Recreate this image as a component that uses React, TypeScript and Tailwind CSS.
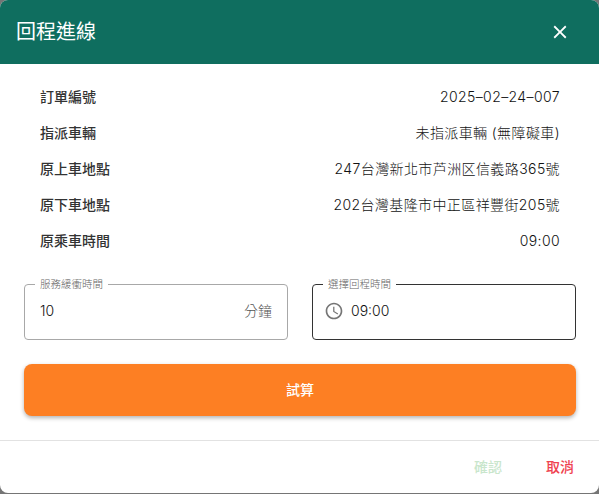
const rows = [
  { label: "訂單編號", value: "2025–02–24–007" },
  { label: "指派車輛", value: "未指派車輛 (無障礙車)" },
  { label: "原上車地點", value: "247台灣新北市芦洲区信義路365號" },
  { label: "原下車地點", value: "202台灣基隆市中正區祥豐街205號" },
  { label: "原乘車時間", value: "09:00" },
];

const font = "font-['Inter','Noto_Sans_CJK_TC',sans-serif]";

export default function App() {
  return (
    <div className={`h-[494px] w-[599px] overflow-hidden bg-[#757575] ${font}`}>
      <div className="flex h-[493px] w-[599px] flex-col overflow-hidden rounded-lg bg-white">
        <div className="flex h-16 items-center justify-between bg-[#0f6e5f] pl-4 pr-[28px]">
          <h2 className="text-xl font-normal text-white">回程進線</h2>
          <svg viewBox="0 0 24 24" className="size-[22px] fill-white">
            <path d="M19 6.41 17.59 5 12 10.59 6.41 5 5 6.41 10.59 12 5 17.59 6.41 19 12 13.41 17.59 19 19 17.59 13.41 12z" />
          </svg>
        </div>

        <div className="flex flex-col pl-10 pr-[39px] pt-[15px]">
          {rows.map((row) => (
            <div key={row.label} className="flex h-9 items-center justify-between text-sm">
              <span className="font-medium text-[#333333]">{row.label}</span>
              <span className="font-light tracking-[0.4px] text-[#111111]">{row.value}</span>
            </div>
          ))}
        </div>

        <div className="mt-5 flex gap-6 pl-6 pr-[23px]">
          <fieldset className="h-[61px] flex-1 rounded border border-[#a8a8a8] pl-[10px] pr-[15px]">
            <legend className="px-[5px] text-[10.5px] font-light leading-[11px] text-[#666666]">服務緩衝時間</legend>
            <div className="flex h-[41px] items-center justify-between pl-[5px] text-sm font-light">
              <span className="text-[#111111]">10</span>
              <span className="text-[#555555]">分鐘</span>
            </div>
          </fieldset>
          <fieldset className="h-[61px] flex-1 rounded border border-[#333333] pl-[10px] pr-[15px]">
            <legend className="px-[5px] text-[10.5px] font-light leading-[11px] text-[#666666]">選擇回程時間</legend>
            <div className="flex h-[41px] items-center gap-[7px] pl-[1px] text-sm font-light">
              <svg viewBox="0 0 24 24" className="size-5 fill-[#757575]">
                <path d="M11.99 2C6.47 2 2 6.48 2 12s4.47 10 9.99 10C17.52 22 22 17.52 22 12S17.52 2 11.99 2zM12 20c-4.42 0-8-3.58-8-8s3.58-8 8-8 8 3.58 8 8-3.58 8-8 8zm.5-13H11v6l5.25 3.15.75-1.23-4.5-2.67z" />
              </svg>
              <span className="text-[#111111]">09:00</span>
            </div>
          </fieldset>
        </div>

        <div className="mt-6 pl-6 pr-[23px]">
          <button className="flex h-[52px] w-full items-center justify-center rounded-lg bg-[#fd7f23] text-sm font-medium text-white shadow-[0_2px_4px_rgba(0,0,0,0.3)]">
            試算
          </button>
        </div>

        <div className="mt-6 flex flex-1 items-center justify-end gap-11 border-t border-[#e2e2e2] pr-[25px] text-sm font-medium">
          <span className="text-[#c9e6cc]">確認</span>
          <span className="text-[#ef4350]">取消</span>
        </div>
      </div>
    </div>
  );
}
